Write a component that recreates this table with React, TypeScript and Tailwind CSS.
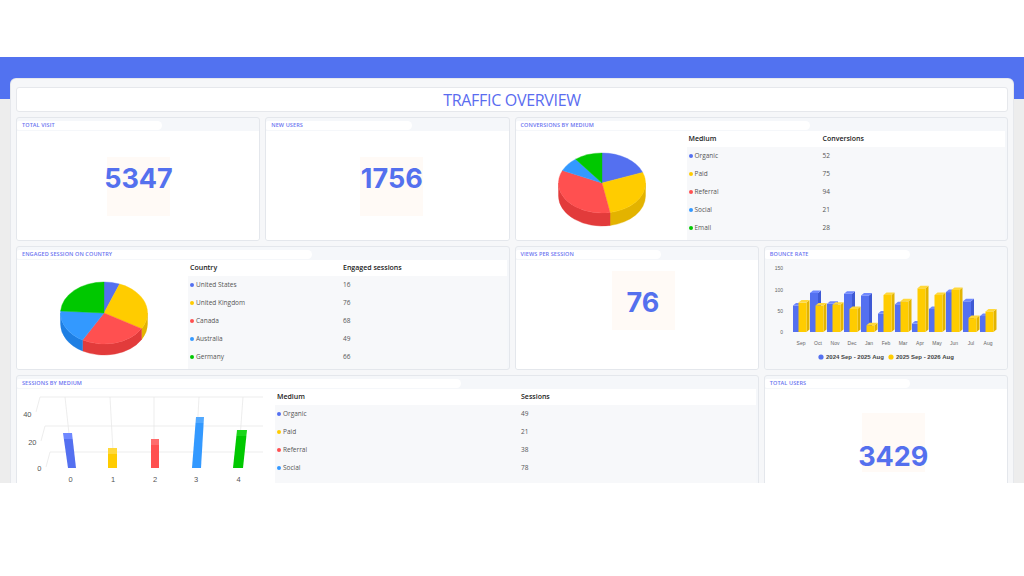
import React from "react";

const BLUE = "#5470f0";
const YEL = "#ffcc00";
const RED = "#ff5050";
const LBLUE = "#3399ff";
const GREEN = "#00c800";

const SIDE: Record<string, string> = {
  [BLUE]: "#3d58d6",
  [YEL]: "#e3b300",
  [RED]: "#e23b3b",
  [LBLUE]: "#1e7fe3",
  [GREEN]: "#00a300",
};

function Pie3D({
  values,
  colors,
  cx,
  cy,
  rx,
  ry,
  depth,
  w,
  h,
}: {
  values: number[];
  colors: string[];
  cx: number;
  cy: number;
  rx: number;
  ry: number;
  depth: number;
  w: number;
  h: number;
}) {
  const total = values.reduce((a, b) => a + b, 0);
  let acc = 0;
  const slices = values.map((v, i) => {
    const s = acc;
    acc += (v / total) * 360;
    return { s, e: acc, c: colors[i] };
  });
  const P = (t: number, dy = 0) => {
    const r = (t * Math.PI) / 180;
    return `${(cx + rx * Math.sin(r)).toFixed(2)} ${(cy - ry * Math.cos(r) + dy).toFixed(2)}`;
  };
  return (
    <svg width={w} height={h} viewBox={`0 0 ${w} ${h}`}>
      {slices.map((sl, i) => {
        const s = Math.max(sl.s, 90);
        const e = Math.min(sl.e, 270);
        if (e <= s) return null;
        const lg = e - s > 180 ? 1 : 0;
        return (
          <path
            key={"s" + i}
            d={`M${P(s)} A${rx} ${ry} 0 ${lg} 1 ${P(e)} L${P(e, depth)} A${rx} ${ry} 0 ${lg} 0 ${P(s, depth)} Z`}
            fill={SIDE[sl.c]}
            stroke={SIDE[sl.c]}
            strokeWidth={0.4}
          />
        );
      })}
      {slices.map((sl, i) => (
        <path
          key={"t" + i}
          d={`M${cx} ${cy} L${P(sl.s)} A${rx} ${ry} 0 ${sl.e - sl.s > 180 ? 1 : 0} 1 ${P(sl.e)} Z`}
          fill={sl.c}
          stroke={sl.c}
          strokeWidth={0.4}
        />
      ))}
    </svg>
  );
}

function Card({
  title,
  children,
  bodyClass,
}: {
  title: string;
  children: React.ReactNode;
  bodyClass: string;
}) {
  return (
    <div className="flex h-full flex-col overflow-hidden rounded-[3px] border border-[#e4e7ec] bg-[#f5f7fa]">
      <div className="h-[13px] shrink-0 pt-[3px]">
        <div className="flex h-[9px] w-[60%] items-center rounded-l-[2px] rounded-r-[5px] bg-white pl-[5px] text-[5.5px] font-semibold uppercase leading-none tracking-[0.1px] text-[#6a73f0]">
          {title}
        </div>
      </div>
      <div className={bodyClass}>{children}</div>
    </div>
  );
}

function Num({ v, box }: { v: string; box: string }) {
  return (
    <div className={box}>
      <span className="whitespace-nowrap font-['Inter',sans-serif] text-[27px] font-bold leading-[27px] text-[#5470ee]">
        {v}
      </span>
    </div>
  );
}

type Row = { label: string; dot: string; value: string };

function DataTable({ h1, h2, col, rows }: { h1: string; h2: string; col: string; rows: Row[] }) {
  return (
    <div className="mr-[2px] flex h-full flex-1 flex-col bg-[#f7f8fa]">
      <div className="flex h-[16px] shrink-0 items-center bg-white pl-[2px] text-[7px] font-semibold text-[#222]">
        <div className={col}>{h1}</div>
        <div>{h2}</div>
      </div>
      {rows.map((r) => (
        <div key={r.label} className="flex h-[18px] shrink-0 items-center pl-[2px] text-[6.5px] text-[#555]">
          <div className={col}>
            <div className="flex items-center gap-[2px]">
              <span className={r.dot} />
              <span>{r.label}</span>
            </div>
          </div>
          <div>{r.value}</div>
        </div>
      ))}
    </div>
  );
}

const DOT_BLUE = "h-[4px] w-[4px] rounded-full bg-[#5470f0]";
const DOT_YEL = "h-[4px] w-[4px] rounded-full bg-[#ffcc00]";
const DOT_RED = "h-[4px] w-[4px] rounded-full bg-[#ff5050]";
const DOT_LBLUE = "h-[4px] w-[4px] rounded-full bg-[#3399ff]";
const DOT_GREEN = "h-[4px] w-[4px] rounded-full bg-[#00c800]";

const convRows: Row[] = [
  { label: "Organic", dot: DOT_BLUE, value: "52" },
  { label: "Paid", dot: DOT_YEL, value: "75" },
  { label: "Referral", dot: DOT_RED, value: "94" },
  { label: "Social", dot: DOT_LBLUE, value: "21" },
  { label: "Email", dot: DOT_GREEN, value: "28" },
];

const countryRows: Row[] = [
  { label: "United States", dot: DOT_BLUE, value: "16" },
  { label: "United Kingdom", dot: DOT_YEL, value: "76" },
  { label: "Canada", dot: DOT_RED, value: "68" },
  { label: "Australia", dot: DOT_LBLUE, value: "49" },
  { label: "Germany", dot: DOT_GREEN, value: "66" },
];

const sessRows: Row[] = [
  { label: "Organic", dot: DOT_BLUE, value: "49" },
  { label: "Paid", dot: DOT_YEL, value: "21" },
  { label: "Referral", dot: DOT_RED, value: "38" },
  { label: "Social", dot: DOT_LBLUE, value: "78" },
  { label: "Email", dot: DOT_GREEN, value: "55" },
];

const COLORS5 = [BLUE, YEL, RED, LBLUE, GREEN];

const blueV = [69, 99, 73, 97, 93, 50, 72, 26, 61, 101, 79, 44];
const yelV = [76, 69, 71, 61, 22, 94, 79, 110, 94, 106, 39, 55];
const months = ["Sep", "Oct", "Nov", "Dec", "Jan", "Feb", "Mar", "Apr", "May", "Jun", "Jul", "Aug"];

function Bar3({ x, v, f, t, s }: { x: number; v: number; f: string; t: string; s: string }) {
  const top = 332 - v * 0.42 + 2.5;
  return (
    <g>
      <polygon points={`${x + 8},${top} ${x + 11},${top - 2.5} ${x + 11},329.5 ${x + 8},332`} fill={s} />
      <rect x={x} y={top} width={8} height={332 - top} fill={f} />
      <polygon points={`${x},${top} ${x + 3},${top - 2.5} ${x + 11},${top - 2.5} ${x + 8},${top}`} fill={t} />
    </g>
  );
}

const CHART_FONT = "Liberation Sans, Arial, sans-serif";

function BounceChart() {
  return (
    <svg width={243} height={108} viewBox="767 260 243 108">
      {[
        ["150", 268],
        ["100", 290],
        ["50", 311],
        ["0", 332],
      ].map(([l, y]) => (
        <text key={l} x={785} y={(y as number) + 1.8} fontSize={5} fill="#666" textAnchor="end" fontFamily={CHART_FONT}>
          {l}
        </text>
      ))}
      {months.map((m, i) => {
        const x0 = 795 + 17 * i;
        return (
          <g key={m}>
            <Bar3 x={x0} v={blueV[i]} f="#5470f0" t="#6f88ff" s="#3e59d4" />
            <Bar3 x={x0 + 5.5} v={yelV[i]} f="#ffcc00" t="#ffd83a" s="#e3b400" />
            <text x={x0 + 8} y={345} fontSize={5} fill="#666" textAnchor="middle" fontFamily={CHART_FONT}>
              {m}
            </text>
          </g>
        );
      })}
      <circle cx={823} cy={357} r={2.6} fill="#5470f0" />
      <text x={828} y={359.1} fontSize={6} fontWeight={700} fill="#444" fontFamily={CHART_FONT}>
        2024 Sep - 2025 Aug
      </text>
      <circle cx={893} cy={357} r={2.6} fill="#ffcc00" />
      <text x={898} y={359.1} fontSize={6} fontWeight={700} fill="#444" fontFamily={CHART_FONT}>
        2025 Sep - 2026 Aug
      </text>
    </svg>
  );
}

function SessBar({
  tl,
  tr,
  bl,
  br,
  yt,
  f,
  t,
}: {
  tl: number;
  tr: number;
  bl: number;
  br: number;
  yt: number;
  f: string;
  t: string;
}) {
  const yb = 468;
  const k = 6 / (yb - yt);
  const ml = tl + (bl - tl) * k;
  const mr = tr + (br - tr) * k;
  const ym = yt + 6;
  return (
    <g>
      <polygon points={`${ml},${ym} ${mr},${ym} ${br},${yb} ${bl},${yb}`} fill={f} />
      <polygon points={`${tl},${yt} ${tr},${yt} ${mr},${ym} ${ml},${ym}`} fill={t} />
    </g>
  );
}

function SessionsChart() {
  const verts: [number, number][] = [
    [65, 71],
    [110, 113],
    [154, 154],
    [199, 196],
    [243, 239],
  ];
  return (
    <svg width={258} height={116} viewBox="17 389 258 116">
      <g stroke="#e9e9e9" strokeWidth={0.8} fill="none">
        <line x1={40} y1={397} x2={263} y2={397} />
        <line x1={45} y1={426} x2={263} y2={426} />
        <line x1={50} y1={452} x2={263} y2={452} />
        <line x1={36} y1={412} x2={40} y2={397} />
        <line x1={41} y1={441} x2={45} y2={426} />
        <line x1={46} y1={467} x2={50} y2={452} />
        {verts.map(([a, b]) => (
          <line key={a} x1={a} y1={397} x2={b} y2={452} />
        ))}
      </g>
      {[
        ["40", 31.5, 414],
        ["20", 36.5, 442],
        ["0", 41.5, 468],
      ].map(([l, x, y]) => (
        <text key={l as string} x={x as number} y={(y as number) + 2.6} fontSize={7.5} fill="#555" textAnchor="end" fontFamily={CHART_FONT}>
          {l}
        </text>
      ))}
      <SessBar tl={63} tr={72} bl={68} br={76} yt={433} f="#5470f0" t="#6f88ff" />
      <SessBar tl={108} tr={117} bl={108} br={117} yt={448} f="#ffcc00" t="#ffd83a" />
      <SessBar tl={151} tr={159} bl={151} br={159} yt={439} f="#ff5050" t="#ff6b6b" />
      <SessBar tl={196} tr={204} bl={192} br={201} yt={417} f="#3399ff" t="#52a9ff" />
      <SessBar tl={237} tr={247} bl={233} br={243} yt={430} f="#00c800" t="#1ad61a" />
      {[
        ["0", 70.7],
        ["1", 113],
        ["2", 155],
        ["3", 196],
        ["4", 238.7],
      ].map(([l, x]) => (
        <text key={l as string} x={x as number} y={481.5} fontSize={7.5} fill="#555" textAnchor="middle" fontFamily={CHART_FONT}>
          {l}
        </text>
      ))}
    </svg>
  );
}

export default function App() {
  return (
    <div className="h-[576px] w-[1024px] overflow-hidden bg-white font-['Open_Sans','Noto_Sans',sans-serif]">
      <div className="h-[57px]" />
      <div className="h-[426px] overflow-hidden bg-[#ededed]">
        <div className="h-[42px] bg-[#5272f0]" />
        <div className="mx-[11px] -mt-[20px] h-[420px] rounded-t-[5px] bg-[#f6f7f9] px-[5px] pt-[8px] ring-1 ring-[#e6e8ec]">
          <div className="flex h-[25px] items-center justify-center rounded-[3px] border border-[#e6e8ec] bg-white text-[16px] font-medium tracking-[-0.3px] text-[#5a6cf0]">
            TRAFFIC OVERVIEW
          </div>
          <div className="mt-[5px] grid grid-cols-4 grid-rows-[124px_124px_130px] gap-[5px]">
            <Card title="Total Visit" bodyClass="min-h-0 flex-1 bg-white">
              <Num v="5347" box="ml-[90px] mt-[26px] flex h-[59px] w-[63px] justify-center bg-[#fffaf6] pt-[8px]" />
            </Card>
            <Card title="New Users" bodyClass="min-h-0 flex-1 bg-white">
              <Num v="1756" box="ml-[94px] mt-[26px] flex h-[59px] w-[63px] justify-center bg-[#fffaf6] pt-[8px]" />
            </Card>
            <div className="col-span-2">
              <Card title="Conversions by medium" bodyClass="flex min-h-0 flex-1">
                <div className="w-[171px] shrink-0 bg-white">
                  <Pie3D values={[52, 75, 94, 21, 28]} colors={COLORS5} cx={86} cy={52} rx={43.5} ry={30} depth={13} w={171} h={109} />
                </div>
                <DataTable h1="Medium" h2="Conversions" col="w-[134px] shrink-0" rows={convRows} />
              </Card>
            </div>

            <div className="col-span-2">
              <Card title="Engaged session on country" bodyClass="flex min-h-0 flex-1">
                <div className="w-[171px] shrink-0 bg-white">
                  <Pie3D values={[16, 76, 68, 49, 66]} colors={COLORS5} cx={87} cy={53} rx={43.5} ry={31} depth={11} w={171} h={109} />
                </div>
                <DataTable h1="Country" h2="Engaged sessions" col="w-[153px] shrink-0" rows={countryRows} />
              </Card>
            </div>
            <Card title="Views per session" bodyClass="min-h-0 flex-1 bg-white">
              <Num v="76" box="ml-[96px] mt-[11px] flex h-[59px] w-[63px] justify-center bg-[#fffaf6] pt-[18px]" />
            </Card>
            <Card title="Bounce rate" bodyClass="min-h-0 flex-1 bg-[#f7f8fa]">
              <BounceChart />
            </Card>

            <div className="col-span-3">
              <Card title="Sessions by medium" bodyClass="flex min-h-0 flex-1">
                <div className="w-[258px] shrink-0 bg-white">
                  <SessionsChart />
                </div>
                <DataTable h1="Medium" h2="Sessions" col="w-[244px] shrink-0" rows={sessRows} />
              </Card>
            </div>
            <Card title="Total users" bodyClass="min-h-0 flex-1 bg-white">
              <Num v="3429" box="ml-[97px] mt-[24px] flex h-[59px] w-[63px] justify-center bg-[#fffaf6] pt-[30px]" />
            </Card>
          </div>
        </div>
      </div>
    </div>
  );
}
